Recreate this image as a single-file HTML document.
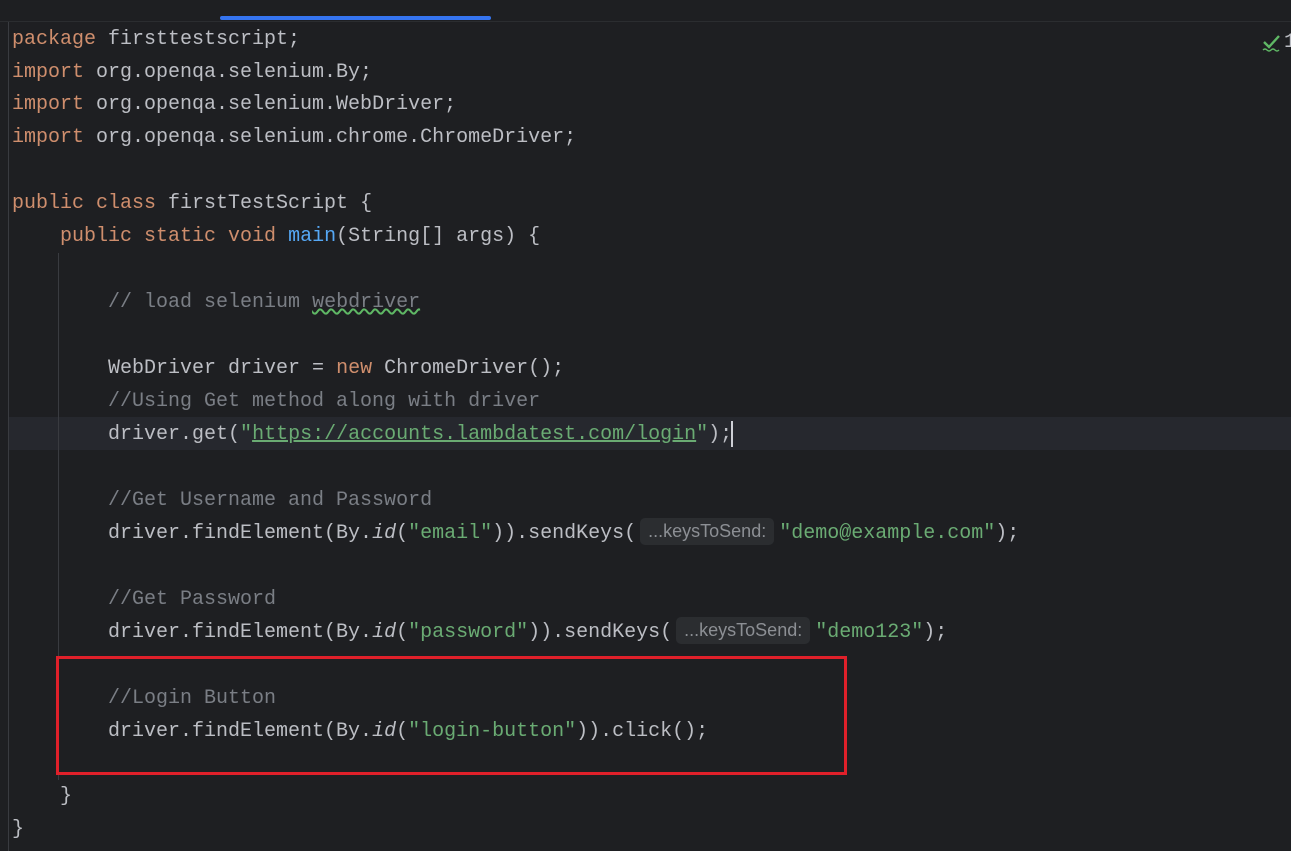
<!DOCTYPE html>
<html><head><meta charset="utf-8"><style>
html,body{margin:0;padding:0;background:#1e1f22;width:1291px;height:851px;overflow:hidden;position:relative}
.l{position:absolute;left:12px;height:33px;line-height:33px;font-family:"Liberation Mono",monospace;font-size:20px;color:#bcbec4;white-space:pre;letter-spacing:0}
.k{color:#cf8e6d}.s{color:#6aab73}.c{color:#7a7e85}.m{color:#56a8f5}.i{font-style:italic}
.u{text-decoration:underline;text-decoration-color:#6aab73}
.h{display:inline-block;font-family:"Liberation Sans",sans-serif;font-size:18px;color:#8c8f94;background:#2b2d30;border-radius:5px;line-height:27px;padding:0 8px;margin:0 5px 0 4px;vertical-align:1px;letter-spacing:0}
</style></head><body>
<div style="position:absolute;left:0;top:21px;width:1291px;height:1px;background:#2b2d30"></div>
<div style="position:absolute;left:220px;top:16px;width:271px;height:4px;background:#3574f0;border-radius:2px"></div>
<div style="position:absolute;left:8px;top:22px;width:1px;height:829px;background:#393b40"></div>
<div style="position:absolute;left:9px;top:417px;width:1282px;height:33px;background:#26282e"></div>
<div style="position:absolute;left:58px;top:253px;width:1px;height:527px;background:#393b40"></div>
<div style="position:absolute;left:1262px;top:33px;width:20px;height:20px">
<svg width="20" height="20"><path d="M2 9 L7 14 L17 3" stroke="#5fb865" stroke-width="2.4" fill="none"/><path d="M1 17 q2 -2 4 0 t4 0 t4 0 t4 0" stroke="#5fb865" stroke-width="1.3" fill="none"/></svg></div>
<div class="l" style="left:1284px;top:26px;color:#bcbec4">1</div>

<div class="l" style="top:23px"><span class="k">package</span> firsttestscript;</div>
<div class="l" style="top:56px"><span class="k">import</span> org.openqa.selenium.By;</div>
<div class="l" style="top:88px"><span class="k">import</span> org.openqa.selenium.WebDriver;</div>
<div class="l" style="top:121px"><span class="k">import</span> org.openqa.selenium.chrome.ChromeDriver;</div>
<div class="l" style="top:187px"><span class="k">public class</span> firstTestScript {</div>
<div class="l" style="top:220px">    <span class="k">public static void</span> <span class="m">main</span>(String[] args) {</div>
<div class="l" style="top:286px">        <span class="c">// load selenium <span style="text-decoration:underline wavy #5fb865">webdriver</span></span></div>
<div class="l" style="top:352px">        WebDriver driver = <span class="k">new</span> ChromeDriver();</div>
<div class="l" style="top:385px">        <span class="c">//Using Get method along with driver</span></div>
<div class="l" style="top:418px">        driver.get(<span class="s">"<span class="u">https://accounts.lambdatest.com/login</span>"</span>);</div>
<div style="position:absolute;left:731px;top:421px;width:2px;height:26px;background:#ced0d6"></div>
<div class="l" style="top:484px">        <span class="c">//Get Username and Password</span></div>
<div class="l" style="top:517px">        driver.findElement(By.<span class="i">id</span>(<span class="s">"email"</span>)).sendKeys(<span class="h">...keysToSend:</span><span class="s">"demo@example.com"</span>);</div>
<div class="l" style="top:583px">        <span class="c">//Get Password</span></div>
<div class="l" style="top:616px">        driver.findElement(By.<span class="i">id</span>(<span class="s">"password"</span>)).sendKeys(<span class="h">...keysToSend:</span><span class="s">"demo123"</span>);</div>
<div class="l" style="top:682px">        <span class="c">//Login Button</span></div>
<div class="l" style="top:715px">        driver.findElement(By.<span class="i">id</span>(<span class="s">"login-button"</span>)).click();</div>
<div class="l" style="top:780px">    }</div>
<div class="l" style="top:813px">}</div>
<div style="position:absolute;left:56px;top:656px;width:785px;height:113px;border:3px solid #e0202a"></div>
</body></html>
